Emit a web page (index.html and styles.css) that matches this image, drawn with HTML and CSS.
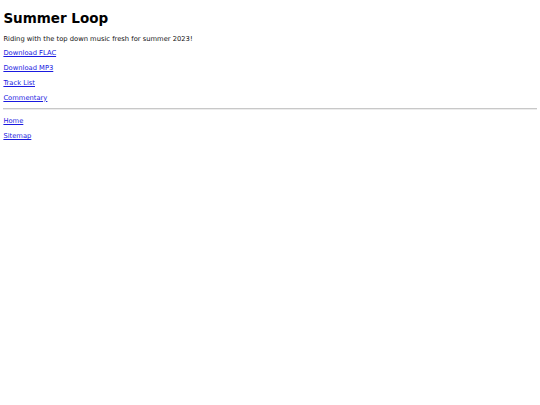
FILE: index.html
```html
<!DOCTYPE html>
<html lang="en">
<head>
<meta charset="utf-8">
<title>Summer Loop</title>
<link rel="stylesheet" href="styles.css">
</head>
<body class="page">
  <h1 class="title">Summer Loop</h1>
  <p class="line">Riding with the top down music fresh for summer 2023!</p>
  <p class="line"><a class="link" href="#">Download FLAC</a></p>
  <p class="line"><a class="link" href="#">Download MP3</a></p>
  <p class="line"><a class="link" href="#">Track List</a></p>
  <p class="line"><a class="link" href="#">Commentary</a></p>
  <hr class="rule">
  <p class="line"><a class="link" href="#">Home</a></p>
  <p class="line"><a class="link" href="#">Sitemap</a></p>
</body>
</html>
```
FILE: styles.css
```css
html {
  background: #fff;
}
.page {
  margin: 3.4px;
  font-family: "DejaVu Sans", sans-serif;
  font-size: 6.75px;
  color: #111;
}
.title {
  font-size: 13.5px;
  font-weight: bold;
  margin: 6.3px 0 9px;
  color: #000;
}
.line {
  margin: 6.75px 0;
}
.link {
  color: #1a1adf;
}
.rule {
  border: 0;
  border-top: 1px solid #c8c8c8;
  border-bottom: 1px solid #ececec;
  height: 0;
  margin: 3.4px 0;
}
```
